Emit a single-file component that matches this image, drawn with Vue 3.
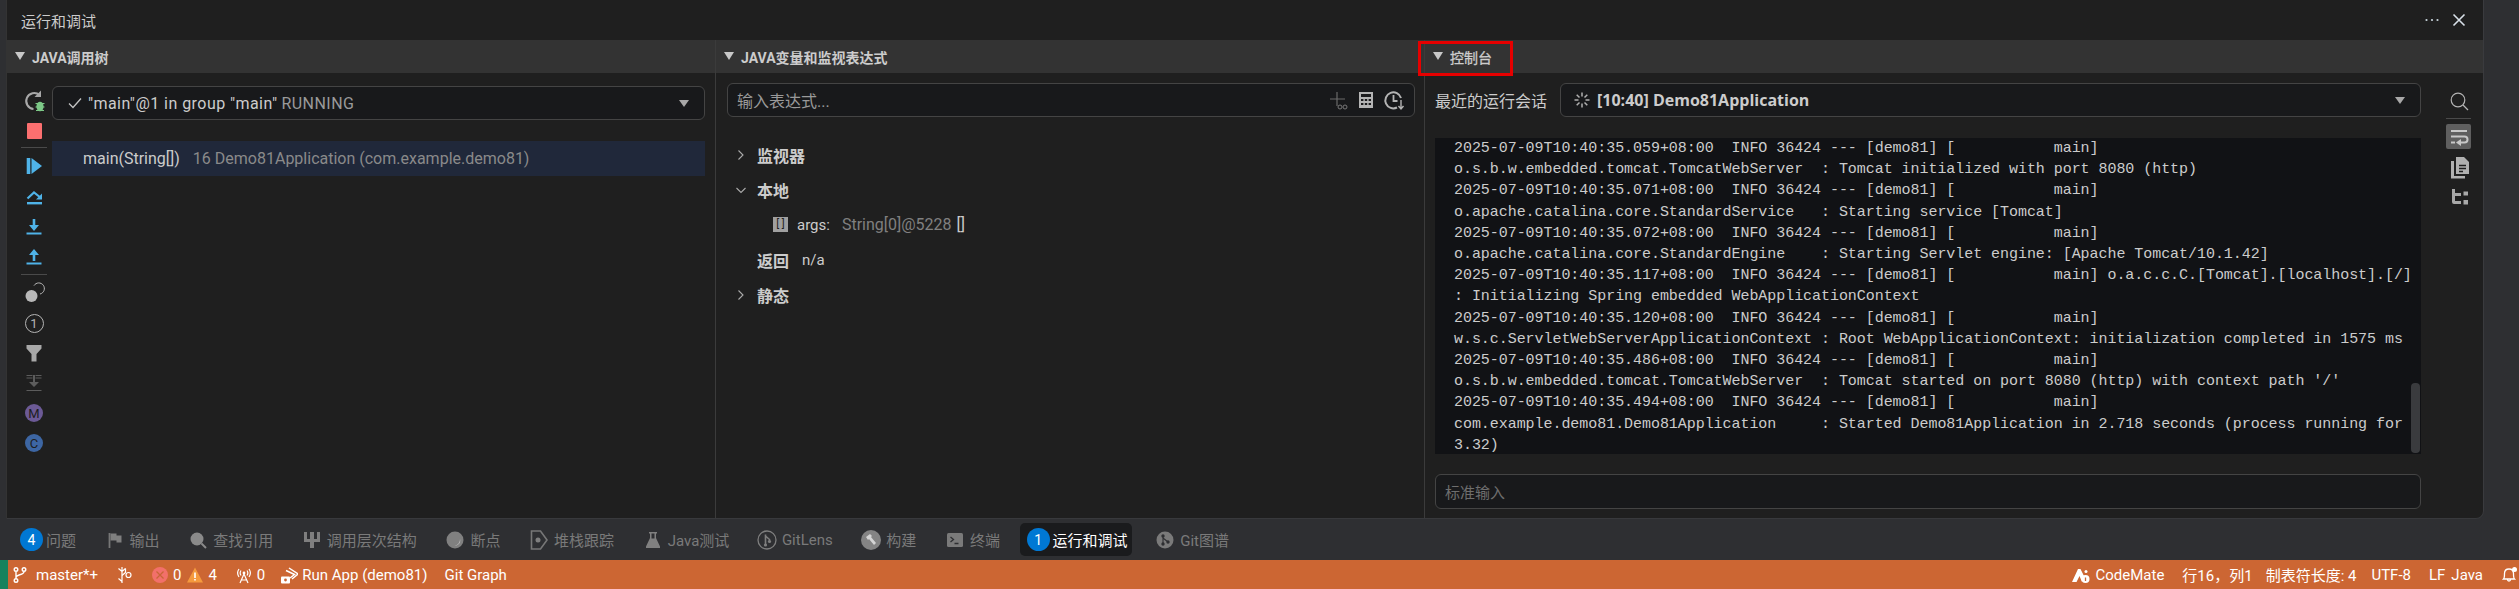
<script setup>
const logLines = [
  '2025-07-09T10:40:35.059+08:00  INFO 36424 --- [demo81] [           main]',
  'o.s.b.w.embedded.tomcat.TomcatWebServer  : Tomcat initialized with port 8080 (http)',
  '2025-07-09T10:40:35.071+08:00  INFO 36424 --- [demo81] [           main]',
  'o.apache.catalina.core.StandardService   : Starting service [Tomcat]',
  '2025-07-09T10:40:35.072+08:00  INFO 36424 --- [demo81] [           main]',
  'o.apache.catalina.core.StandardEngine    : Starting Servlet engine: [Apache Tomcat/10.1.42]',
  '2025-07-09T10:40:35.117+08:00  INFO 36424 --- [demo81] [           main] o.a.c.c.C.[Tomcat].[localhost].[/]',
  ': Initializing Spring embedded WebApplicationContext',
  '2025-07-09T10:40:35.120+08:00  INFO 36424 --- [demo81] [           main]',
  'w.s.c.ServletWebServerApplicationContext : Root WebApplicationContext: initialization completed in 1575 ms',
  '2025-07-09T10:40:35.486+08:00  INFO 36424 --- [demo81] [           main]',
  "o.s.b.w.embedded.tomcat.TomcatWebServer  : Tomcat started on port 8080 (http) with context path '/'",
  '2025-07-09T10:40:35.494+08:00  INFO 36424 --- [demo81] [           main]',
  'com.example.demo81.Demo81Application     : Started Demo81Application in 2.718 seconds (process running for',
  '3.32)'
]
</script>

<template>
  <div class="root">
    <div class="main">
      <div class="strip-left"></div>
      <section class="panel">
        <header class="title">
          <span>运行和调试</span>
          <div class="title-actions">
            <svg width="18" height="18" viewBox="0 0 18 18"><g fill="#c8d4dc"><circle cx="3.5" cy="9" r="1.1"/><circle cx="9" cy="9" r="1.1"/><circle cx="14.5" cy="9" r="1.1"/></g></svg>
            <svg width="18" height="18" viewBox="0 0 18 18"><path d="M3.5 3.5l11 11M14.5 3.5l-11 11" stroke="#d8e0e8" stroke-width="1.6" fill="none"/></svg>
          </div>
        </header>
        <div class="cols">
          <!-- call tree -->
          <div class="col">
            <div class="head"><i class="tri"></i><span>JAVA调用树</span></div>
            <div class="tree-body">
              <div class="tools">
                <div class="tool"><svg width="26" height="26" viewBox="0 0 26 26"><path d="M18.500 7A8 8 0 1 0 12.500 21" fill="none" stroke="#a8a8a8" stroke-width="2"/><path d="M20 2.500v6.500h-6.500" fill="#a8a8a8"/><ellipse cx="19" cy="18.500" rx="3.600" ry="4.800" fill="#7cc886"/><path d="M14.500 15.500h9M14.500 19h9M15 22.500h8" stroke="#7cc886" stroke-width="1.200"/></svg></div>
                <div class="tool"><span class="stop"></span></div>
                <div class="sep"></div>
                <div class="tool"><svg width="26" height="26" viewBox="0 0 26 26"><path d="M5.700 5h3.600v16H5.700z" fill="#4fb3e8"/><path d="M10.500 5L21 13 10.500 21z" fill="#4fb3e8"/></svg></div>
                <div class="tool"><svg width="26" height="26" viewBox="0 0 26 26"><path d="M6 19h15v2.400H6z" fill="#4fb3e8"/><path d="M6.500 15.500L13 9.500l7 5.500" fill="none" stroke="#4fb3e8" stroke-width="2.200"/><path d="M21 10.500v6h-6z" fill="#4fb3e8"/></svg></div>
                <div class="tool"><svg width="26" height="26" viewBox="0 0 26 26"><path d="M5.500 19.500h15v2h-15z" fill="#4fb3e8"/><path d="M11.700 6h2.600v6H18l-5 6-5-6h3.700z" fill="#4fb3e8"/></svg></div>
                <div class="tool"><svg width="26" height="26" viewBox="0 0 26 26"><path d="M5.500 19.500h15v2h-15z" fill="#4fb3e8"/><path d="M11.700 18h2.600v-6H18l-5-6-5 6h3.700z" fill="#4fb3e8"/></svg></div>
                <div class="sep wide"></div>
                <div class="tool"><svg width="26" height="26" viewBox="0 0 26 26"><circle cx="10.500" cy="16" r="6" fill="#b8b8b8"/><path d="M13 5.600A5.600 5.600 0 1 1 19 14" fill="none" stroke="#b8b8b8" stroke-width="1"/></svg></div>
                <div class="tool"><span class="circled">1</span></div>
                <div class="tool"><svg width="26" height="26" viewBox="0 0 26 26"><path d="M5.500 5h15v3.500L15.500 14v7.500h-5V14L5.500 8.500z" fill="#a8a8a8"/></svg></div>
                <div class="tool"><svg width="26" height="26" viewBox="0 0 26 26"><path d="M5.500 5.500h6M14.500 5.500h6M5.500 8h6M14.500 8h6M5.500 20.500h15" stroke="#5c5c5c" stroke-width="1.200"/><path d="M12 5v7H8l5 5 5-5h-4V5z" fill="#5c5c5c"/></svg></div>
                <div class="tool"><span class="letter m">M</span></div>
                <div class="tool"><span class="letter c">C</span></div>
              </div>
              <div class="tree-main">
                <div class="select thread">
                  <svg class="check" width="16" height="16" viewBox="0 0 16 16"><path d="M2 8.500l4 4 8-9" fill="none" stroke="#c4c4c4" stroke-width="1.300"/></svg>
                  <span class="bright">"main"@1 in group "main"</span><span class="dim-space">RUNNING</span>
                  <i class="sel-tri"></i>
                </div>
                <div class="frame"><span class="bright">main(String[])</span><span class="frame-loc">16 Demo81Application (com.example.demo81)</span></div>
              </div>
            </div>
          </div>

          <!-- variables -->
          <div class="col bordered">
            <div class="head"><i class="tri"></i><span>JAVA变量和监视表达式</span></div>
            <div class="vars-body">
              <div class="select expr">
                <span class="placeholder">输入表达式...</span>
                <div class="expr-icons">
                  <svg width="22" height="22" viewBox="0 0 22 22"><path d="M10 3v14M3 10h15" stroke="#6a6a6a" stroke-width="1.200"/><g fill="none" stroke="#777" stroke-width="1"><circle cx="13" cy="18" r="2"/><circle cx="18" cy="18" r="2"/></g></svg>
                  <svg width="18" height="22" viewBox="0 0 18 22"><path d="M2 3h14v16H2z" fill="#b4b4b4"/><path d="M4 5h10v3H4z" fill="#1a1a1c"/><path d="M4 10h2.400v2H4zM7.800 10h2.400v2H7.800zM11.600 10H14v2h-2.400zM4 14h2.400v2H4zM7.800 14h2.400v2H7.800zM11.600 14H14v2h-2.400z" fill="#1a1a1c"/></svg>
                  <svg width="22" height="22" viewBox="0 0 22 22"><path d="M14 18.500A8 8 0 1 1 18 9" fill="none" stroke="#b4b4b4" stroke-width="2"/><path d="M10.500 6v6h4" fill="none" stroke="#b4b4b4" stroke-width="1.800"/><path d="M18 11v8M15.500 17l2.500 3 2.500-3" fill="none" stroke="#b4b4b4" stroke-width="1.400"/></svg>
                </div>
              </div>
              <div class="vars">
                <div class="var-row"><svg class="chev" width="10" height="14" viewBox="0 0 10 14"><path d="M2.500 2.500L7 7l-4.500 4.500" fill="none" stroke="#aaa" stroke-width="1.100"/></svg><b>监视器</b></div>
                <div class="var-row"><svg class="chev" width="10" height="14" viewBox="0 0 10 14"><path d="M.5 5L5 9.500 9.500 5" fill="none" stroke="#aaa" stroke-width="1.100"/></svg><b>本地</b></div>
                <div class="var-row child">
                  <span class="arr-icon"><span>[ ]</span></span>
                  <span class="bright">args:</span><span class="arg-type">String[0]@5228</span><span class="arg-val">[]</span>
                </div>
                <div class="var-row leaf"><b>返回</b><span class="na">n/a</span></div>
                <div class="var-row"><svg class="chev" width="10" height="14" viewBox="0 0 10 14"><path d="M2.500 2.500L7 7l-4.500 4.500" fill="none" stroke="#aaa" stroke-width="1.100"/></svg><b>静态</b></div>
              </div>
            </div>
          </div>

          <!-- console -->
          <div class="col bordered">
            <div class="head console-head"><i class="tri"></i><span>控制台</span><div class="redbox"></div></div>
            <div class="console-body">
              <div class="console-main">
                <div class="session">
                  <span class="session-label">最近的运行会话</span>
                  <div class="select session-sel">
                    <svg width="18" height="18" viewBox="0 0 18 18"><g stroke="#b0b0b0" stroke-width="1.500"><path d="M9 1.500v4M9 12.500v4M1.500 9h4M12.500 9h4M3.700 3.700l2.800 2.800M11.500 11.500l2.800 2.800M14.300 3.700l-2.800 2.800M6.500 11.500l-2.800 2.800"/></g></svg>
                    <b class="session-name">[10:40] Demo81Application</b>
                    <i class="sel-tri"></i>
                  </div>
                </div>
                <div class="output">
                  <div v-for="(line, i) in logLines" :key="i" class="log">{{ line }}</div>
                  <div class="scrollthumb"></div>
                </div>
                <div class="select stdin"><span class="placeholder dim">标准输入</span></div>
              </div>
              <div class="tools console-tools">
                <div class="ctool"><svg width="22" height="22" viewBox="0 0 22 22"><circle cx="10" cy="10" r="6.800" fill="none" stroke="#b4b4b4" stroke-width="1.200"/><path d="M15 15l5 5" stroke="#b4b4b4" stroke-width="1.200"/></svg></div>
                <div class="csep"></div>
                <div class="ctool active"><svg width="22" height="22" viewBox="0 0 22 22"><g fill="none" stroke="#c8c8c8" stroke-width="2"><path d="M3 5h16M3 10.500h13.500a3 3 0 0 1 0 6H11"/><path d="M3 16.500h4"/></g><path d="M13 13l-5 3.500 5 3.500z" fill="#c8c8c8"/></svg></div>
                <div class="ctool"><svg width="22" height="24" viewBox="0 0 22 24"><path d="M8 2h8l5 5v12H8z" fill="#b0b0b0"/><path d="M3 6h3v15h11v2.500H3z" fill="#b0b0b0"/><path d="M11 10.500h7M11 13.500h7M11 16.500h4" stroke="#1e1e1e" stroke-width="1.300"/></svg></div>
                <div class="ctool"><svg width="22" height="22" viewBox="0 0 22 22"><path d="M4 3h3v4h6v3H7v5h6v3H6a2 2 0 0 1-2-2z" fill="#a8a8a8"/><path d="M15.500 5.500h4.500v4h-4.500zM15.500 14h4.500v4.500h-4.500z" fill="#a8a8a8"/></svg></div>
              </div>
            </div>
          </div>
        </div>
      </section>
      <div class="strip-right"></div>
    </div>

    <nav class="tabs">
      <div class="tab first"><span class="badge">4</span><span>问题</span></div>
      <div class="tab"><svg width="18" height="18" viewBox="0 0 18 18"><path d="M3.500 2v15" stroke="#777" stroke-width="1.800"/><path d="M4.500 2.500h6v2h5v7h-5v-2h-6z" fill="#7f7f7f"/></svg><span>输出</span></div>
      <div class="tab"><svg width="18" height="18" viewBox="0 0 18 18"><circle cx="8" cy="8" r="6.500" fill="#8a8a8a"/><path d="M12.500 12.500l4.500 4.500" stroke="#8a8a8a" stroke-width="2"/></svg><span>查找引用</span></div>
      <div class="tab"><svg class="wide-ico" width="20" height="18" viewBox="0 0 20 18"><path d="M2 1h3v7h3V1h4v7h3V1h3v10h-6v6H8v-6H2z" fill="#7f7f7f"/></svg><span>调用层次结构</span></div>
      <div class="tab"><svg width="18" height="18" viewBox="0 0 18 18"><circle cx="9" cy="9" r="8.500" fill="#808080"/><path d="M14 8a5 5 0 0 1-5.500 6.500A6 6 0 0 0 14 8z" fill="#c4c4c4"/></svg><span>断点</span></div>
      <div class="tab"><svg class="wide-ico" width="20" height="22" viewBox="0 0 20 22"><path d="M2.500 2h9l6.500 9-6.500 9h-9z" fill="none" stroke="#777" stroke-width="1.600"/><circle cx="9" cy="11" r="2.500" fill="#7f7f7f"/></svg><span>堆栈跟踪</span></div>
      <div class="tab java"><svg width="18" height="18" viewBox="0 0 18 18"><path d="M5 1h8v1.500h-1V7l4 8.500V17H2v-1.500L6 7V2.500H5z" fill="#808080"/><path d="M7.500 2.500h3v5H7.500z" fill="#2e2f32"/></svg><span>Java测试</span></div>
      <div class="tab"><svg class="wide-ico" width="20" height="20" viewBox="0 0 20 20"><circle cx="10" cy="10" r="9" fill="none" stroke="#7f7f7f" stroke-width="1.300"/><path d="M8.500 4.500v11M8.500 6l4 3.500v1.500" fill="none" stroke="#7f7f7f" stroke-width="1.600"/><circle cx="8.500" cy="15" r="1.600" fill="#7f7f7f"/><circle cx="12.500" cy="11.500" r="1.600" fill="#7f7f7f"/></svg><span>GitLens</span></div>
      <div class="tab"><svg class="wide-ico" width="20" height="20" viewBox="0 0 20 20"><circle cx="10" cy="10" r="10" fill="#848484"/><path d="M5 7l4-3 2 2-1 1 5 6-2 2-5-6-1 1z" fill="#d4d4d4"/></svg><span>构建</span></div>
      <div class="tab"><svg width="18" height="18" viewBox="0 0 18 18"><rect x="1" y="2" width="16" height="14" rx="1.500" fill="#7a7a7a"/><path d="M4.500 6l3 2.500-3 2.500M8.500 12.500h4" fill="none" stroke="#2e2f32" stroke-width="1.300"/></svg><span>终端</span></div>
      <div class="tab active"><span class="badge">1</span><span>运行和调试</span></div>
      <div class="tab"><svg width="18" height="18" viewBox="0 0 18 18"><circle cx="9" cy="9" r="8.500" fill="#7a7a7a"/><g fill="#2e2f32"><circle cx="7" cy="5" r="1.700"/><circle cx="7" cy="13" r="1.700"/><circle cx="12" cy="11" r="1.700"/></g><path d="M7 5v8M7 7l5 4" stroke="#2e2f32" stroke-width="1.100"/></svg><span>Git图谱</span></div>
    </nav>

    <footer class="status">
      <div class="remote"></div>
      <div class="sb-left">
        <div class="sb-item"><svg width="16" height="18" viewBox="0 0 16 18"><g fill="none" stroke="#fff" stroke-width="1.400"><circle cx="4" cy="3.500" r="1.800"/><circle cx="4" cy="14.500" r="1.800"/><circle cx="12" cy="3.500" r="1.800"/><path d="M4 5.500v7M12 5.500c0 4-8 2.500-8 6"/></g></svg><span class="branch">master*+</span></div>
        <div class="sb-item"><svg width="16" height="20" viewBox="0 0 16 20"><g fill="none" stroke="#fff" stroke-width="1.200"><path d="M5 2v16M1.500 3.500l3.500 3 3.500-3M1.500 13.500l3.500 3"/><circle cx="11.500" cy="10" r="2.500"/><path d="M8.500 3.500v4l-3.500 3"/></g></svg></div>
        <div class="sb-item">
          <svg width="16" height="16" viewBox="0 0 16 16"><circle cx="8" cy="8" r="8" fill="#f2706a"/><path d="M4.500 4.500l7 7M11.500 4.500l-7 7" stroke="#c96537" stroke-width="1.300"/></svg><span>0</span>
          <svg class="warn" width="16" height="16" viewBox="0 0 16 16"><path d="M8 .5l8 15H0z" fill="#f59a3e"/><path d="M7.200 5.500h1.600v5.500H7.200zM7.200 12h1.600v1.600H7.200z" fill="#fff"/></svg><span>4</span>
        </div>
        <div class="sb-item"><svg width="16" height="18" viewBox="0 0 16 18"><g fill="none" stroke="#fff" stroke-width="1.200"><path d="M3 3a7 7 0 0 0 0 8M13 3a7 7 0 0 1 0 8M5 4.500a4.500 4.500 0 0 0 0 5M11 4.500a4.500 4.500 0 0 1 0 5M8 8l-4 9M8 8l4 9M5.500 14h5"/></g><circle cx="8" cy="7" r="1.400" fill="#fff"/></svg><span>0</span></div>
        <div class="sb-item run"><svg width="18" height="18" viewBox="0 0 18 18"><path d="M9 2l9 6-6 5" fill="none" stroke="#fff" stroke-width="1.500"/><path d="M6 4.500l8.500 4L10 12" fill="none" stroke="#fff" stroke-width="1.500"/><rect x="1" y="10.500" width="9" height="7" rx="1" fill="#fff"/><circle cx="5.500" cy="14" r="1.400" fill="#c96537"/></svg><span>Run App (demo81)</span></div>
        <div class="sb-item graph"><span>Git Graph</span></div>
      </div>
      <div class="sb-right">
        <div class="sb-item"><svg width="18" height="18" viewBox="0 0 18 18"><path d="M0 16L6 3h2.500L12 10l-2 6-2.500-6L4.500 16z" fill="#fff"/><circle cx="13.500" cy="13" r="4" fill="#fff"/><path d="M13.500 11.500v3.500" stroke="#c96537" stroke-width="1.300"/><circle cx="14" cy="5.500" r="1.500" fill="#fff"/></svg><span>CodeMate</span></div>
        <div class="sb-item pos"><span>行16，列1</span></div>
        <div class="sb-item tabsize"><span>制表符长度: 4</span></div>
        <div class="sb-item"><span>UTF-8</span></div>
        <div class="sb-item lf"><span>LF</span></div>
        <div class="sb-item"><span>Java</span></div>
        <div class="sb-item"><svg width="16" height="18" viewBox="0 0 16 18"><path d="M2.500 13c1-1 1-3 1-5.500C3.500 4.500 5 3 8 3s4.500 1.500 4.500 4.500c0 2.500 0 4.500 1 5.500zM6.500 13.500a1.500 1.500 0 0 0 3 0" fill="none" stroke="#fff" stroke-width="1.300"/><circle cx="13.500" cy="3.500" r="2.500" fill="#fff"/></svg></div>
      </div>
    </footer>
  </div>
</template>

<style>
html, body { margin: 0; background: #2e2f32; }
</style>

<style scoped>
.root {
  width: 2519px;
  height: 589px;
  display: flex;
  flex-direction: column;
  overflow: hidden;
  font-family: Roboto, "Noto Sans CJK SC", sans-serif;
  font-size: 15px;
  color: #ccc;
  background: #2e2f32;
}
.main { display: flex; height: 519px; }
.strip-left { width: 6px; flex: none; }
.strip-right { width: 35px; flex: none; }
.panel {
  flex: 1;
  min-width: 0;
  display: flex;
  flex-direction: column;
  background: #1f1f1f;
  border-bottom: 1px solid #38393c;
  border-right: 1px solid #3a3b3e;
  border-left: 1px solid #333;
  border-radius: 0 0 8px 0;
  overflow: hidden;
}
.title {
  height: 40px;
  flex: none;
  display: flex;
  align-items: center;
  justify-content: space-between;
  padding: 0 15px 0 14px;
}
.title-actions { display: flex; gap: 9px; align-items: center; }
.cols { flex: 1; display: grid; grid-template-columns: 708px 709px 1fr; min-height: 0; }
.col { display: flex; flex-direction: column; min-width: 0; }
.bordered { border-left: 1px solid #3b3b3b; }
.head {
  position: relative;
  height: 33px;
  flex: none;
  display: flex;
  align-items: center;
  gap: 7px;
  padding-left: 8px;
  background: #333333;
  font-size: 14px;
  font-weight: 700;
  color: #ccc;
}
.tri {
  display: block;
  width: 0;
  height: 0;
  border-left: 5px solid transparent;
  border-right: 5px solid transparent;
  border-top: 8px solid #c8c8c8;
  margin-top: -2px;
}
.console-head { padding-left: 8px; font-weight: 400; -webkit-text-stroke: .3px #ccc; }
.redbox {
  position: absolute;
  left: -7px;
  top: 1px;
  width: 89px;
  height: 29px;
  border: 3px solid #e60000;
}
.tree-body { flex: 1; display: flex; padding-top: 13px; min-height: 0; }
.tools { width: 45px; flex: none; padding-left: 14px; box-sizing: border-box; }
.tool { width: 26px; height: 30px; display: flex; align-items: center; justify-content: center; }
.stop { width: 15px; height: 16px; background: #fb6f6f; border-radius: 1px; }
.sep { height: 5px; width: 26px; position: relative; }
.sep::after { content: ""; position: absolute; left: 0; right: 0; top: 1px; height: 1px; background: #4a4a4a; }
.sep.wide { height: 7px; }
.sep.wide::after { top: 3px; }
.circled {
  width: 17px;
  height: 17px;
  border: 1px solid #b4b4b4;
  border-radius: 50%;
  display: flex;
  align-items: center;
  justify-content: center;
  font-size: 13px;
  color: #b4b4b4;
}
.letter {
  width: 18px;
  height: 18px;
  border-radius: 50%;
  display: flex;
  align-items: center;
  justify-content: center;
  font-size: 13px;
  color: #1e1e1e;
}
.m { background: #6c5a96; }
.c { background: #3d66a3; }
.tree-main { flex: 1; min-width: 0; padding-right: 10px; }
.select {
  position: relative;
  height: 34px;
  display: flex;
  align-items: center;
  border: 1px solid #444;
  border-radius: 6px;
  background: #18191b;
  box-sizing: border-box;
  padding-left: 14px;
}
.thread { font-size: 16px; letter-spacing: .45px; }
.check { margin-right: 5px; }
.bright { color: #ccc; }
.dim-space { color: #9a9a9a; margin-left: 4px; }
.sel-tri {
  position: absolute;
  right: 15px;
  top: 13px;
  width: 0;
  height: 0;
  border-left: 5px solid transparent;
  border-right: 5px solid transparent;
  border-top: 7px solid #a8a8a8;
}
.frame {
  margin-top: 21px;
  height: 35px;
  display: flex;
  align-items: center;
  gap: 13px;
  padding-left: 31px;
  background: #20283a;
  font-size: 16px;
}
.frame-loc { color: #8a8a8a; }
.vars-body { flex: 1; padding: 10px 9px 0 11px; min-width: 0; }
.expr { padding-left: 9px; font-size: 16px; }
.placeholder { color: #9a9a9a; }
.placeholder.dim { color: #6e6e6e; font-size: 15px; }
.expr-icons { position: absolute; right: 9px; top: 5px; display: flex; align-items: center; gap: 8px; }
.vars { margin-top: 20px; }
.var-row { height: 35px; display: flex; align-items: center; }
.var-row b { font-size: 16px; color: #ccc; font-weight: 700; }
.chev { margin-left: 9px; margin-right: 11px; flex: none; }
.child { padding-left: 46px; }
.leaf { padding-left: 30px; }
.arr-icon {
  width: 15px;
  height: 15px;
  background: #a0a0a0;
  color: #1e1e1e;
  font-size: 11px;
  line-height: 14px;
  text-align: center;
  margin-right: 9px;
  white-space: pre;
}
.arg-type { color: #808080; margin-left: 12px; font-size: 16px; }
.arg-val { color: #ccc; margin-left: 5px; font-size: 16px; }
.na { margin-left: 13px; color: #ccc; }
.console-body { flex: 1; display: flex; min-height: 0; }
.console-main {
  flex: 1;
  min-width: 0;
  display: flex;
  flex-direction: column;
  padding: 10px 0 0 10px;
}
.session { display: flex; align-items: center; gap: 11px; height: 34px; flex: none; }
.session-label { font-size: 16px; width: 114px; flex: none; padding-left: 0; white-space: nowrap; }
.session-sel { flex: 1; padding-left: 12px; }
.session-name { margin-left: 6px; font-family: "Open Sans", "Noto Sans CJK SC", sans-serif; font-size: 16px; color: #ccc; }
.output {
  position: relative;
  margin-top: 21px;
  height: 316px;
  flex: none;
  background: #111215;
  overflow: hidden;
  padding-left: 19px;
}
.log {
  font-family: "Liberation Mono", monospace;
  font-size: 15px;
  letter-spacing: -.05px;
  line-height: 21.2px;
  white-space: pre;
  color: #ccc;
}
.scrollthumb {
  position: absolute;
  right: 1px;
  top: 245px;
  width: 9px;
  height: 70px;
  border-radius: 4px;
  background: #3a3b3e;
}
.stdin { margin-top: 20px; height: 35px; padding-left: 9px; flex: none; }
.console-tools { width: 62px; padding: 13px 0 0 25px; }
.ctool { width: 25px; height: 30px; display: flex; align-items: center; justify-content: center; }
.ctool.active { height: 25px; background: #5f5f5f; border-radius: 2px; margin-bottom: 3px; }
.csep { height: 1px; width: 25px; background: #4a4a4a; margin: 2px 0 5px; }
.tabs {
  height: 41px;
  flex: none;
  display: flex;
  align-items: center;
  padding-left: 20px;
  gap: 29.6px;
  color: #7a7a7a;
}
.tab { display: flex; align-items: center; gap: 6px; white-space: nowrap; }
.tab svg { flex: none; }
.tab svg.wide-ico { margin: 0 -1px; }
.tab.java { margin-right: -1px; }
.badge {
  width: 23px;
  height: 23px;
  border-radius: 50%;
  background: #0078d4;
  color: #fff;
  display: flex;
  align-items: center;
  justify-content: center;
  font-size: 14px;
  margin-right: -3px;
}
.tab.first { gap: 6px; }
.tab.active {
  height: 33px;
  background: #1a1b1d;
  border-radius: 5px;
  padding: 0 4px 0 7px;
  margin: 0 -5px 0 -10px;
  color: #fff;
}
.status {
  height: 29px;
  flex: none;
  display: flex;
  align-items: center;
  background: #cc6633;
  color: #fff;
  font-size: 15px;
}
.remote { width: 8px; height: 29px; background: #16825d; flex: none; }
.sb-left { display: flex; align-items: center; gap: 19px; margin-left: 4px; }
.sb-right { display: flex; align-items: center; gap: 18px; margin-left: auto; padding-right: 2px; }
.sb-item { display: flex; align-items: center; gap: 5px; white-space: nowrap; }
.branch { margin-left: 3px; }
.warn { margin-left: 1px; }
.run { margin-left: -4px; gap: 4px; }
.graph { margin-left: -2px; }
.pos { margin-right: -5px; }
.tabsize { margin-right: -3px; }
.lf { margin-right: -12px; }
</style>
